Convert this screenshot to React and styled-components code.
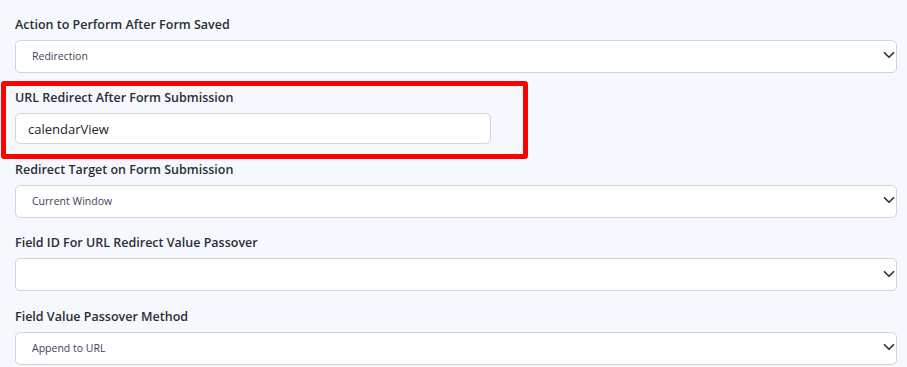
import React from 'react'
import styled, { createGlobalStyle } from 'styled-components'

const GlobalStyle = createGlobalStyle`
    html, body {
        margin: 0;
        padding: 0;
        background: #f5f9fe;
    }
    body {
        font-family: "Open Sans", "Noto Sans", Arial, sans-serif;
        color: #212529;
    }
`

const fields = [
    { label: 'Action to Perform After Form Saved', type: 'select', value: 'Redirection' },
    { label: 'URL Redirect After Form Submission', type: 'input', value: 'calendarView', highlight: true },
    { label: 'Redirect Target on Form Submission', type: 'select', value: 'Current Window' },
    { label: 'Field ID For URL Redirect Value Passover', type: 'select', value: '' },
    { label: 'Field Value Passover Method', type: 'select', value: 'Append to URL' },
]

const Chevron = () => (
    <Arrow viewBox='0 0 16 16' aria-hidden='true'>
        <path d='M2 5l6 6 6-6' fill='none' stroke='#2c3442' strokeWidth='2.3' strokeLinecap='round' strokeLinejoin='round' />
    </Arrow>
)

const App = () => {
    return (
        <Page>
            <GlobalStyle />
            {fields.map((f) => (
                <Field key={f.label} $highlight={f.highlight}>
                    <Label>{f.label}</Label>
                    {f.type === 'select' ? (
                        <SelectWrap>
                            <Select defaultValue={f.value}>
                                <option value={f.value}>{f.value}</option>
                            </Select>
                            <Chevron />
                        </SelectWrap>
                    ) : (
                        <TextInput type='text' defaultValue={f.value} />
                    )}
                </Field>
            ))}
        </Page>
    )
}

const Page = styled.div`
    display: flex;
    flex-direction: column;
    gap: 15.5px;
    padding: 14.5px 10px 0 15px;
    min-height: 100vh;
    box-sizing: border-box;
`
const Field = styled.div`
    display: flex;
    flex-direction: column;
    position: relative;

    ${({ $highlight }) => $highlight && `
        &:after {
            content: '';
            position: absolute;
            top: -7.5px;
            left: -14px;
            width: 527px;
            bottom: -14.5px;
            border: 5px solid #ff0000;
            border-radius: 3px;
            box-sizing: border-box;
            pointer-events: none;
        }
    `}
`
const Label = styled.label`
    font-size: 12.5px;
    font-weight: 600;
    line-height: 19px;
    margin-bottom: 6px;
    color: #2a2e34;
`
const SelectWrap = styled.div`
    position: relative;
    width: 882px;
`
const Select = styled.select`
    appearance: none;
    -webkit-appearance: none;
    width: 100%;
    height: 33px;
    padding: 0 30px 0 16px;
    border: 1px solid #d0d5db;
    border-radius: 5px;
    background: #fff;
    font-family: "Open Sans", "Noto Sans", Arial, sans-serif;
    font-size: 10.5px;
    color: #3e3f55;
    outline: none;
`
const Arrow = styled.svg`
    position: absolute;
    right: 2px;
    top: 50%;
    width: 12px;
    height: 12px;
    margin-top: -7px;
    pointer-events: none;
`
const TextInput = styled.input`
    width: 476px;
    height: 31px;
    box-sizing: border-box;
    padding: 0 12px;
    border: 1px solid #d0d5db;
    border-radius: 5px;
    background: #fff;
    font-family: "Open Sans", "Noto Sans", Arial, sans-serif;
    font-size: 13px;
    color: #212529;
    outline: none;
`

export default App
